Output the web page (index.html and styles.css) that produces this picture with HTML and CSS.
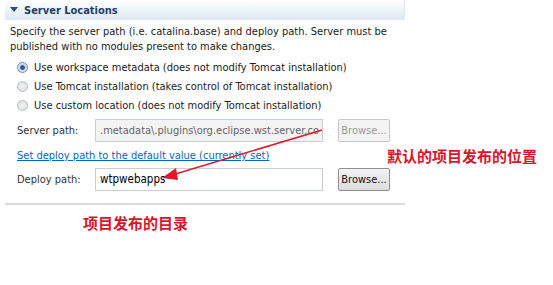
FILE: index.html
```html
<!DOCTYPE html>
<html lang="en">
<head>
  <meta charset="UTF-8">
  <title>Server Locations</title>
  <link rel="stylesheet" href="styles.css">
</head>
<body>
  <div class="section">
    <div class="section-head">
      <svg class="twisty" width="8" height="6" viewBox="0 0 8 6"><path d="M0 0 H8 L4 5 Z" fill="#2b4a75"/></svg>
      <span class="section-title">Server Locations</span>
    </div>

    <p class="desc">Specify the server path (i.e. catalina.base) and deploy path. Server must be published with no modules present to make changes.</p>

    <div class="radio-group">
      <label class="radio-row"><span class="radio checked"></span>Use workspace metadata (does not modify Tomcat installation)</label>
      <label class="radio-row disabled"><span class="radio"></span>Use Tomcat installation (takes control of Tomcat installation)</label>
      <label class="radio-row disabled"><span class="radio"></span>Use custom location (does not modify Tomcat installation)</label>
    </div>

    <div class="field-row">
      <span class="field-label">Server path:</span>
      <div class="text-box readonly">.metadata\.plugins\org.eclipse.wst.server.co</div>
      <button class="browse" disabled>Browse...</button>
    </div>

    <a class="default-link" href="#">Set deploy path to the default value (currently set)</a>

    <div class="field-row deploy-row">
      <span class="field-label">Deploy path:</span>
      <div class="text-box strong">wtpwebapps</div>
      <button class="browse">Browse...</button>
    </div>

    <div class="separator"></div>
  </div>

  <!-- annotations drawn over the screenshot -->
  <svg class="arrow" width="553" height="285" viewBox="0 0 553 285">
    <line x1="322" y1="130" x2="172" y2="175" stroke="#e0182a" stroke-width="1.5"/>
    <path d="M162 178 L176 168 L178 180 Z" fill="#e0182a"/>
  </svg>
  <div class="note note-default">默认的项目发布的位置</div>
  <div class="note note-dir">项目发布的目录</div>
</body>
</html>
```

FILE: styles.css
```css
body {
  margin: 0;
  width: 553px;
  height: 285px;
  background: #fff;
  font-family: "DejaVu Sans Condensed", "DejaVu Sans", sans-serif;
  font-size: 11px;
  color: #1a1a1a;
  position: relative;
  overflow: hidden;
}

.section {
  width: 400px;
  margin-left: 5px;
}

.section-head {
  height: 20px;
  display: flex;
  align-items: center;
  gap: 6px;
  padding-left: 5px;
  background: linear-gradient(#ffffff, #dde7f3);
  border-right: 1px solid #e3e9f1;
}

.section-title {
  font-weight: bold;
  font-size: 11px;
  color: #213f69;
}

.desc {
  margin: 4px 0 0 5px;
  line-height: 15px;
}

.radio-group {
  margin: 4px 0 0 12px;
  display: flex;
  flex-direction: column;
}

.radio-row {
  display: flex;
  align-items: center;
  gap: 6px;
  height: 19px;
}

.radio-row.disabled {
  color: #222;
}

.radio {
  width: 9px;
  height: 9px;
  border-radius: 50%;
  border: 1px solid #b6bec6;
  background: radial-gradient(#f2f2f2, #d9dde1);
}

.radio.checked {
  border-color: #6b8dae;
  background: radial-gradient(#2b5c93 30%, #c8d8ea 45%, #eef3f8);
}

.field-row {
  display: grid;
  grid-template-columns: 63px 228px 52px;
  column-gap: 15px;
  align-items: center;
  margin: 4px 0 0 12px;
  height: 23px;
}

.deploy-row {
  margin-top: 5px;
}

.field-label {
  color: #333;
  white-space: nowrap;
}

.text-box {
  height: 21px;
  line-height: 21px;
  border: 1px solid #c9ced4;
  padding: 0 4px;
  white-space: nowrap;
  overflow: hidden;
  background: #fff;
}

.text-box.strong {
  font-size: 11.5px;
  color: #000;
}

.text-box.readonly {
  background: #f3f3f3;
  color: #666;
}

.browse {
  height: 23px;
  font: inherit;
  padding: 0;
  border: 1px solid #8c8f93;
  border-radius: 2px;
  background: linear-gradient(#f4f4f4, #dcdcdc);
  color: #111;
}

.browse:disabled {
  border-color: #c5c7ca;
  background: #f4f4f4;
  color: #9a9a9a;
}

.default-link {
  display: block;
  margin: 7px 0 0 12px;
  color: #0a66c2;
  line-height: 14px;
}

.separator {
  margin-top: 12px;
  height: 2px;
  background: #dadada;
}

.arrow {
  position: absolute;
  left: 0;
  top: 0;
}

.note {
  position: absolute;
  font-family: "Noto Sans CJK SC", sans-serif;
  font-size: 15px;
  font-weight: bold;
  color: #d9142b;
  line-height: 18px;
}

.note-default {
  left: 387px;
  top: 147px;
}

.note-dir {
  left: 83px;
  top: 214px;
}
```
